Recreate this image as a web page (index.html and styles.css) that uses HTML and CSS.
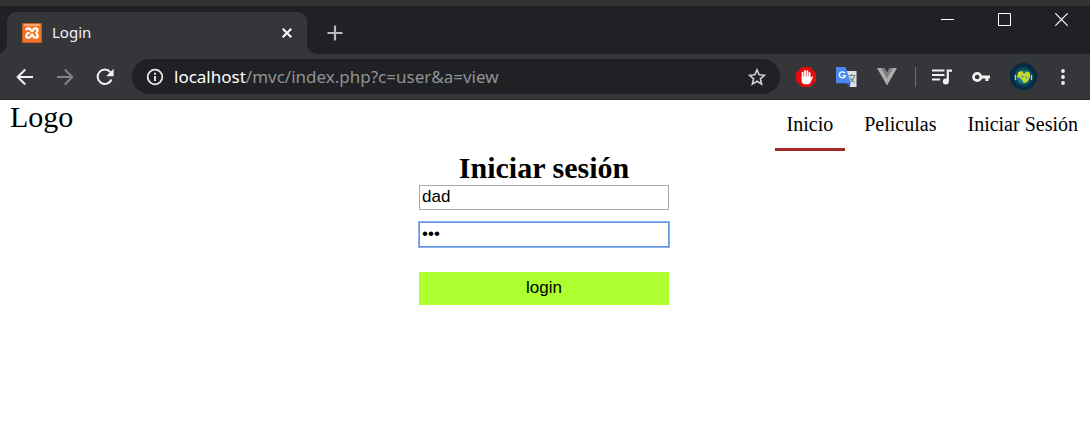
FILE: index.html
```html
<!DOCTYPE html>
<html lang="es">
<head>
<meta charset="utf-8">
<title>Login</title>
<link rel="stylesheet" href="styles.css">
</head>
<body>
<div class="browser">
  <div class="titlebar">
    <div class="tab">
      <svg class="favicon" width="20" height="20" viewBox="0 0 20 20"><rect width="20" height="20" rx="1" fill="#c95c1a"/><rect x="1" y="1" width="18" height="18" fill="#f07426"/><rect x="2" y="1" width="16" height="2" fill="#f7a777"/><path d="M4.300 6.300C5 5.300 8 4.800 8.700 6.700c.3 1 .5 1.600 1.300 1.600s1-.6 1.300-1.600c.7-1.900 4.300-1.600 4.300.4 0 1.300-.7 2-1.500 2.900.9.800 1.600 1.600 1.600 2.900 0 2.100-3.700 2.400-4.400.5-.3-1-.5-1.700-1.300-1.700s-1 .7-1.300 1.700c-.7 1.900-4.400 1.600-4.400-.5 0-1.300.7-2.100 1.600-2.900H7" fill="none" stroke="#fff" stroke-width="2.200" stroke-linecap="round" stroke-linejoin="round"/></svg>
      <span class="tab-title">Login</span>
      <button class="icon-button tab-close" aria-label="Cerrar pestaña"><svg width="10" height="10" viewBox="0 0 10 10"><path d="M.7.7l8.600 8.600M9.300.7L.7 9.300" stroke="#fff" stroke-width="2"/></svg></button>
    </div>
    <button class="icon-button new-tab" aria-label="Nueva pestaña"><svg width="16" height="16" viewBox="0 0 16 16"><path d="M8 .5v15M.5 8h15" stroke="#b9babc" stroke-width="2.200"/></svg></button>
    <div class="window-controls">
      <button class="icon-button" aria-label="Minimizar"><svg width="13" height="13" viewBox="0 0 13 13"><path d="M0 6.500h13" stroke="#fff"/></svg></button>
      <button class="icon-button" aria-label="Maximizar"><svg width="13" height="13" viewBox="0 0 13 13"><path d="M.5.5h12v12H.5z" stroke="#fff" fill="none"/></svg></button>
      <button class="icon-button" aria-label="Cerrar"><svg width="13" height="13" viewBox="0 0 13 13"><path d="M.3.3l12.400 12.400M12.700.3L.3 12.700" stroke="#fff" stroke-width="1.200"/></svg></button>
    </div>
  </div>
  <div class="toolbar">
    <div class="history">
      <button class="icon-button" aria-label="Atrás"><svg width="18" height="18" viewBox="0 0 18 18"><path d="M17 9H2M9.200 1.500L1.700 9l7.500 7.500" stroke="#f1f1f2" stroke-width="2" fill="none"/></svg></button>
      <button class="icon-button" aria-label="Adelante"><svg width="18" height="18" viewBox="0 0 18 18"><path d="M1 9h15M8.800 1.500l7.500 7.500-7.500 7.500" stroke="#818285" stroke-width="2" fill="none"/></svg></button>
      <button class="icon-button" aria-label="Recargar"><svg width="18" height="18" viewBox="0 0 18 18"><path d="M15.500 11.500A7.200 7.200 0 1 1 14.300 4.100" stroke="#f1f1f2" stroke-width="2" fill="none"/><path d="M17.600.8v7.400h-7.400z" fill="#f1f1f2"/></svg></button>
    </div>
    <div class="omnibox">
      <svg width="18" height="18" viewBox="0 0 18 18"><circle cx="9" cy="9" r="7.300" fill="none" stroke="#e8eaed" stroke-width="1.800"/><path d="M9 8v5M9 4.700v2" stroke="#e8eaed" stroke-width="1.900"/></svg>
      <div class="url"><span class="host">localhost</span>/mvc/index.php?c=user&amp;a=view</div>
      <button class="icon-button" aria-label="Añadir a marcadores"><svg width="18" height="18" viewBox="0 0 18 18"><path d="M9 1.800l2.100 5 5.400.5-4.100 3.500 1.200 5.300L9 13.300l-4.600 2.800 1.200-5.300-4.100-3.500 5.400-.5z" fill="none" stroke="#d0d1d4" stroke-width="1.600"/></svg></button>
    </div>
    <div class="extensions">
      <button class="icon-button" aria-label="Bloqueador de anuncios"><svg width="20" height="20" viewBox="0 0 20 20"><path d="M6 0h8l6 6v8l-6 6H6l-6-6V6z" fill="#e40d0d"/><path d="M6.600 11V5.600M9 10V3.800M11.400 10V4.200M13.600 11V6" stroke="#fff" stroke-width="1.800" stroke-linecap="round"/><path d="M5.700 9.500h8.800v2.200l1.100-2c.5-.9 1.700-.4 1.300.6l-2.300 5c-.6 1.300-1.400 1.900-2.500 1.900H9c-2 0-3.300-1.200-3.300-3.200z" fill="#fff"/></svg></button>
      <button class="icon-button" aria-label="Traductor"><svg width="21" height="20" viewBox="0 0 21 20"><path d="M10 4h10.500v16H14z" fill="#dfe1e2"/><path d="M12.500 8.500h7M15.800 7v1.500M18.500 8.800c-.6 2.900-2.200 5-5 6.400M14 10.500c.9 2 2.400 3.600 4.700 4.700" stroke="#71878c" stroke-width="1.200" fill="none"/><path d="M0 0h9.500l5.500 16.300H0z" fill="#4a88ee"/><path d="M10.500 16.300H15l-3 3.700z" fill="#2456bb"/><path d="M8.900 6.200A3 3 0 1 0 9.300 8.600H6.800" stroke="#fff" stroke-width="1.400" fill="none"/></svg></button>
      <button class="icon-button" aria-label="Vue"><svg width="20" height="18" viewBox="0 0 20 18"><path d="M0 0h20L10 17.500z" fill="#adadad"/><path d="M4 0h12l-6 10.500z" fill="#7d7e80"/><path d="M7.500 0h5L10 4.200z" fill="#35363a"/></svg></button>
    </div>
    <div class="profile">
      <button class="icon-button" aria-label="Cola de reproducción"><svg width="20" height="16" viewBox="0 0 20 16"><path d="M0 1.500h12.500M0 6h12.500M0 10.500h8" stroke="#eff0f1" stroke-width="1.900"/><circle cx="13.800" cy="12.500" r="3" fill="#eff0f1"/><path d="M15.800 12.500V1.700H20" fill="none" stroke="#eff0f1" stroke-width="2.200"/></svg></button>
      <button class="icon-button" aria-label="Contraseñas"><svg width="18" height="12" viewBox="0 0 18 12"><circle cx="5.200" cy="6" r="3.700" fill="none" stroke="#f1f1f2" stroke-width="2.700"/><path d="M9 6h9M14.900 6v4" stroke="#f1f1f2" stroke-width="3"/></svg></button>
      <button class="icon-button" aria-label="Perfil"><svg width="27" height="27" viewBox="0 0 27 27"><circle cx="13.500" cy="13.500" r="13.500" fill="#062b42"/><circle cx="13.500" cy="14" r="10" fill="#08454f"/><circle cx="13.500" cy="14" r="7" fill="#1b788b"/><path d="M8 9l4-1 2 3 3-3 3 2v4l-3 5-3 1-2-3-2-2-3-1 1-3z" fill="#cbd72b"/><path d="M11 13l2-1 1 2-2 1zM16 13l2 1-1 2-2-1z" fill="#59a889"/><path d="M5 15C4 4 23 4 22 15" fill="none" stroke="#195867" stroke-width="1.300"/><path d="M5.500 12v5M21.500 12v5" stroke="#c7d287" stroke-width="1.300"/></svg></button>
      <button class="icon-button more" aria-label="Menú"><svg width="4" height="16" viewBox="0 0 4 16"><g fill="#f1f1f2"><circle cx="2" cy="2" r="1.900"/><circle cx="2" cy="8" r="1.900"/><circle cx="2" cy="14" r="1.900"/></g></svg></button>
    </div>
  </div>
</div>
<header class="site-header">
  <div class="logo">Logo</div>
  <nav class="menu">
    <a class="active" href="#">Inicio</a>
    <a href="#">Peliculas</a>
    <a href="#">Iniciar Sesión</a>
  </nav>
</header>
<main>
  <form class="login">
    <h1>Iniciar sesión</h1>
    <input type="text" aria-label="Usuario" value="dad">
    <input class="focused" type="password" aria-label="Contraseña" value="dad">
    <button class="submit" type="button">login</button>
  </form>
</main>
</body>
</html>
```
FILE: styles.css
```css
* { box-sizing: border-box; }
body {
  margin: 0;
  background: #fff;
  color: #000;
  font-family: "Liberation Serif", "Times New Roman", serif;
}
svg { display: block; flex: none; }
.browser {
  border-top: 6px solid #323232;
  border-bottom: 1px solid #28292b;
  font-family: "Noto Sans", sans-serif;
}
.icon-button {
  display: flex;
  align-items: center;
  justify-content: center;
  padding: 0;
  border: 0;
  background: none;
}
.titlebar {
  display: flex;
  height: 48px;
  padding-left: 7px;
  background: #202124;
}
.tab {
  position: relative;
  display: flex;
  align-items: center;
  width: 300px;
  margin-top: 6px;
  padding: 0 15px;
  border-radius: 9px 9px 0 0;
  background: #35363a;
  color: #f1f1f2;
  font-size: 15px;
}
.tab::before,
.tab::after {
  content: "";
  position: absolute;
  bottom: 0;
  width: 9px;
  height: 9px;
}
.tab::before {
  right: 100%;
  background: radial-gradient(circle at 0 0, #202124 8px, #35363a 9px);
}
.tab::after {
  left: 100%;
  background: radial-gradient(circle at 100% 0, #202124 8px, #35363a 9px);
}
.tab-title {
  margin-left: 10px;
  line-height: 20px;
  padding-bottom: 2px;
}
.tab-close { margin-left: auto; }
.new-tab { margin: 6px 0 0 20px; }
.window-controls {
  display: flex;
  align-items: flex-start;
  gap: 44px;
  margin-left: auto;
  padding: 7px 22px 0 0;
}
.toolbar {
  display: flex;
  align-items: center;
  height: 45px;
  padding: 0 21px 0 16px;
  background: #35363a;
}
.history {
  display: flex;
  gap: 22px;
  margin-right: 18px;
}
.omnibox {
  display: flex;
  flex: 1;
  align-items: center;
  min-width: 0;
  height: 35px;
  padding: 0 14px;
  border-radius: 18px;
  background: #202124;
}
.url {
  flex: 1;
  min-width: 0;
  margin-left: 10px;
  overflow: hidden;
  color: #909296;
  font-size: 17px;
  white-space: nowrap;
}
.host { color: #fff; }
.extensions {
  display: flex;
  align-items: center;
  gap: 20px;
  margin-left: 16px;
  padding-right: 18px;
  border-right: 1px solid #6c6d70;
}
.profile {
  display: flex;
  align-items: center;
  gap: 20px;
  margin-left: 16px;
}
.more { width: 12px; }
.site-header {
  display: flex;
  justify-content: space-between;
  padding-left: 10px;
}
.logo { font-size: 30px; line-height: 34px; }
.menu { display: flex; gap: 7px; }
.menu a {
  padding: 13px 12px 12px;
  border-bottom: 3px solid transparent;
  color: #000;
  font-size: 20px;
  line-height: 23px;
  text-decoration: none;
}
.menu .active { border-color: #a52a2a; }
main { padding-right: 2px; }
.login {
  display: flex;
  flex-direction: column;
  width: 250px;
  margin: 0 auto;
}
h1 {
  margin: 0;
  font-size: 30px;
  line-height: 34px;
  text-align: center;
}
.login input {
  height: 25px;
  margin-bottom: 12px;
  padding: 0 2px 2px;
  border: 1px solid #a9a9a9;
  border-radius: 0;
  background: #fff;
  color: #000;
  font: 17px "Liberation Sans", Arial, sans-serif;
}
.login .focused {
  border-color: #6295df;
  outline: 1px solid #8bb2ed;
}
.submit {
  height: 33px;
  margin-top: 13px;
  padding: 0 0 2px;
  border: 0;
  background: #adff2f;
  color: #000;
  font: 17px "Liberation Sans", Arial, sans-serif;
}
```
